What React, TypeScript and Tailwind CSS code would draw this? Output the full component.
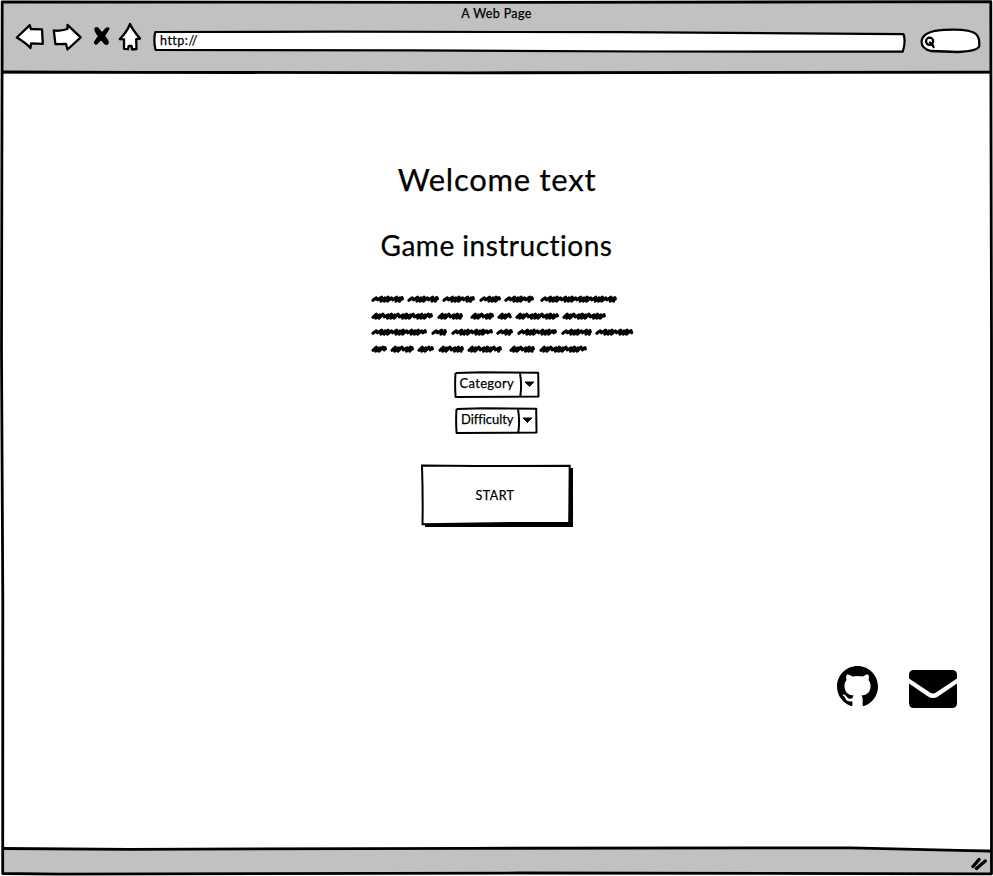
import React from "react";

const ROWS: [number, number][][] = [
  [[0, 32], [36, 67], [71, 103], [108, 129], [133, 162], [169, 245]],
  [[0, 61], [66, 91], [99, 122], [126, 139], [144, 187], [191, 234]],
  [[0, 55], [60, 75], [80, 121], [125, 141], [146, 185], [190, 220], [224, 261]],
  [[0, 15], [19, 42], [46, 62], [67, 92], [96, 130], [138, 163], [168, 215]],
];

// One pen stroke per word: slanted loops whose spacing varies a little.
function scribble(start: number, end: number, seed: number) {
  let x = start + 1.4;
  let d = `M${x} 8.3`;
  let i = seed;
  while (x < end - 5) {
    const wide = (i * 7 + seed * 3) % 4 === 0;
    const step = wide ? 5.2 : 3.3;
    d += ` L${(x + 3.4).toFixed(1)} ${i % 2 ? 5.2 : 5.8} L${(x + step - 0.5).toFixed(1)} ${wide ? 7.8 : 9.2}`;
    x += step;
    i++;
  }
  return d + ` L${end - 1.6} 5.6 L${end - 1.2} 7`;
}

function Scribbles() {
  return (
    <div className="ml-[371px] mt-[29px] flex w-[264px] flex-col">
      {ROWS.map((row, r) => (
        <svg key={r} className="block h-[16.6px] w-[264px] overflow-visible" viewBox="0 0 264 16.6" fill="none" stroke="black" strokeWidth="3.1" strokeLinecap="round" strokeLinejoin="round">
          {row.map(([a, b], i) => <path key={a} d={scribble(a + 0.5, b + 0.6, r + i * 2)} />)}
        </svg>
      ))}
    </div>
  );
}

function Select({ label, width, divider, className }: { label: string; width: number; divider: number; className: string }) {
  return (
    <button className={`relative flex h-[27px] items-center text-left ${className}`}>
      <svg className="absolute inset-0 h-full w-full" viewBox={`0 0 ${width} 27`} fill="none" stroke="black" strokeWidth="2" strokeLinejoin="round">
        <path d={`M1.5 2 L28 1.2 L${width - 1.8} 1.7 L${width - 1.5} 25.5 L1.6 26 Q.7 14 1.5 2 M${divider} 2 Q${divider + 2} 14 ${divider + 0.3} 25.5`} />
        <path d={`M${divider + 5} 11 h8.8 l-4.4 4.4 z`} fill="black" strokeWidth="1" />
      </svg>
      <span className="relative -mt-[3px] pl-[6px] text-[13px] leading-4">{label}</span>
    </button>
  );
}

export default function App() {
  return (
    <div className="flex h-[876px] w-[993px] flex-col overflow-hidden bg-white font-['Lato','Open_Sans',sans-serif] text-black [-webkit-text-stroke:0.25px_black]">
      <div className="relative flex h-[875px] w-[993px] flex-col">
        <header className="flex h-[74px] shrink-0 flex-col bg-[#c1c1c1]">
          <div className="flex h-[28px] items-center justify-center text-[12.5px] tracking-[0.37px]">A Web Page</div>
          <div className="flex h-[30px] items-start pl-[15px]">
            <svg className="-mt-[6px] h-[32px] w-[128px] shrink-0" viewBox="15 22 128 32" fill="white" stroke="black" strokeWidth="2.3" strokeLinejoin="round">
              <path d="M16.8 37.5 L29.8 25.2 L30.8 29 L42 29.3 L42.8 43.8 L31 43.3 L30.5 48 Q26 43 16.8 37.5Z" />
              <path d="M53.8 30.3 Q59 31.6 67.5 29 L67.5 24.8 L80.7 37.3 L67.5 49.5 L66 43.8 L55.4 44.2 Q54.8 39 53.8 30.3Z" />
              <path d="M130 24 Q132 29 140 38.5 L136.2 39.2 L136.5 49 L132.2 49.5 L131.5 46 L128.7 46 L128 49.2 L124 48.8 L124 39.3 L119.8 39 Q127 32 130 24Z" />
              <path d="M94.5 28 Q97 25.8 99 28.2 L102 32 L105.8 27.8 Q110 26 109.5 29 L105.2 36 Q109.8 41 108.6 43.8 Q106.5 46.3 104.2 44 L101 40.5 L97 44.5 Q94 45.5 93.8 42 L97.8 36 Q93.5 31 94.5 28Z" fill="black" stroke="none" />
            </svg>
            <div className="relative ml-[10px] mt-[2px] flex h-[23px] w-[753px] items-center">
              <svg className="absolute inset-0 h-full w-full" viewBox="0 0 753 23" fill="white" stroke="black" strokeWidth="2.2" strokeLinejoin="round">
                <path d="M2.3 2 L185 1.7 L470 2.2 L750.5 4.2 Q753 11 749.8 21.7 L490 21.5 L260 20.4 L2.5 19.8 Q.3 10 2.3 2Z" />
              </svg>
              <span className="relative pl-[7px] text-[12.5px] tracking-[0.5px]">http://</span>
            </div>
            <svg className="ml-[13px] h-[26px] w-[62px] shrink-0" viewBox="919 28 62 26" fill="white" stroke="black" strokeWidth="2.3">
              <path d="M921.5 42 Q922 31 944 29.8 Q970 28.4 976 34 Q980 38 979.2 46 Q978 51 958 52 Q944 51.5 931 51 Q922 49 921.5 42Z" />
              <circle cx="929.6" cy="41.3" r="3.6" /><path d="M930 42.5 L932 44.3 L933.6 47" fill="none" strokeLinecap="round" />
            </svg>
          </div>
        </header>

        <main className="flex h-[775px] flex-col bg-white">
          <h1 className="mt-[85px] pl-px text-center text-[31px] leading-[40px] tracking-[0.75px]">Welcome text</h1>
          <h2 className="mt-[28px] text-center text-[28px] leading-[36px] tracking-[0.5px]">Game instructions</h2>
          <Scribbles />
          <div className="mt-[13px] flex flex-col items-center gap-[9px]">
            <Select label="Category" width={86} divider={66} className="w-[86px] tracking-[0.32px]" />
            <Select label="Difficulty" width={83} divider={63} className="w-[83px] tracking-[-0.05px]" />
          </div>
          <button className="relative ml-[421px] mt-[30px] flex h-[65px] w-[153px] items-center justify-center">
            <svg className="absolute inset-0 h-full w-full" viewBox="0 0 153 65" stroke="black" strokeWidth="2">
              <path d="M4 4 H152 V63 H4Z" fill="black" stroke="none" />
              <path d="M1 1.5 L55 2 L148.7 1.8 L148.2 58.8 L95 59 L1.5 60.3 Q2 32 1 1.5Z" fill="white" />
            </svg>
            <span className="relative -mt-[2px] -ml-[5px] text-[12.5px] tracking-[0.45px]">START</span>
          </button>
          <div className="mt-[137px] flex items-start justify-end gap-[31px] pr-[36px]">
            <svg className="h-[41px] w-[41px]" viewBox="0 0 16 16" preserveAspectRatio="none" fill="black">
              <path d="M8 0C3.58 0 0 3.58 0 8c0 3.54 2.29 6.53 5.47 7.59.4.07.55-.17.55-.38 0-.19-.01-.82-.01-1.49-2.01.37-2.53-.49-2.69-.94-.09-.23-.48-.94-.82-1.13-.28-.15-.68-.52-.01-.53.63-.01 1.08.58 1.23.82.72 1.21 1.87.87 2.33.66.07-.52.28-.87.51-1.07-1.78-.2-3.64-.89-3.64-3.95 0-.87.31-1.59.82-2.15-.08-.2-.36-1.02.08-2.12 0 0 .67-.21 2.2.82.64-.18 1.32-.27 2-.27s1.36.09 2 .27c1.53-1.04 2.2-.82 2.2-.82.44 1.1.16 1.92.08 2.12.51.56.82 1.27.82 2.15 0 3.07-1.87 3.75-3.65 3.95.29.25.54.73.54 1.48 0 1.07-.01 1.93-.01 2.2 0 .21.15.46.55.38A8.01 8.01 0 0 0 16 8c0-4.42-3.58-8-8-8Z" />
            </svg>
            <svg className="mt-[4px] h-[38px] w-[48px]" viewBox="0 0 48 38" fill="black">
              <path d="M5 0 H43 Q48 0 48 5 V8.5 L27 22.5 Q24 24.5 21 22.5 L0 8.5 V5 Q0 0 5 0Z" />
              <path d="M0 13.5 L19 26.5 Q24 29.5 29 26.5 L48 13.5 V33 Q48 38 43 38 H5 Q0 38 0 33Z" />
            </svg>
          </div>
        </main>

        <footer className="flex h-[26px] shrink-0 items-center justify-end bg-[#c1c1c1] pr-[5px]">
          <svg className="mt-[3px] h-[14px] w-[17px]" viewBox="971 856 17 14" stroke="black" strokeWidth="3.4" strokeLinecap="round"><path d="M973 865.5 L979 858.5 M976.5 867.5 L985.2 860" /></svg>
        </footer>
        <svg aria-hidden="true" className="pointer-events-none absolute inset-0 h-[876px] w-[993px]" viewBox="0 0 993 876" fill="none" stroke="black" strokeWidth="2.8" strokeLinejoin="round">
          <path d="M0 0 H993 V876 H0Z M3 2 L2 300 L3 874 L991 874 L991 300 L990.5 2Z" fill="white" fillRule="evenodd" stroke="none" />
          <path d="M2.2 1.8 L500 2.3 L990.8 1.7 L991 120 L991.5 340 L991.5 873.8 L520 873 L60 874.2 L2.7 873.5 L2.8 600 L1.5 350Z" />
          <path d="M2 72 L140 72.3 L470 72.8 L991 72.2" />
          <path d="M3 848.5 L130 849.3 L470 848.3 L850 847.8 L991 851.2" />
        </svg>
      </div>
    </div>
  );
}
